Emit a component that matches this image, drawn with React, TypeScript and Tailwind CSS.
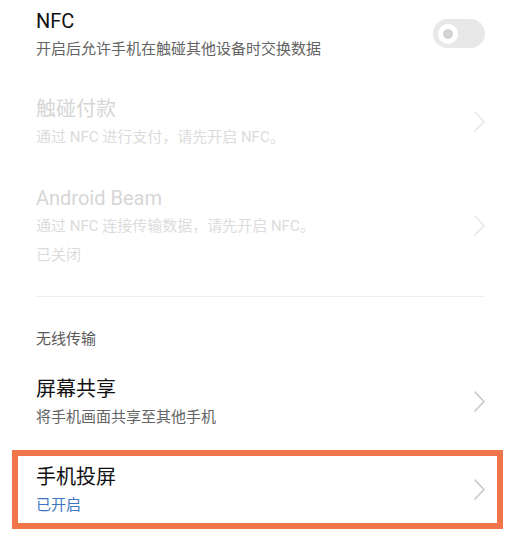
/**
 * 连接与共享 — NFC / 无线传输设置页
 */

const FONT = "font-['Roboto','Noto_Sans_CJK_SC',sans-serif]"

// ─── 小部件 ──────────────────────────────────────────────

function Chevron({ disabled }: { disabled?: boolean }) {
  return (
    <svg
      width="11"
      height="21"
      viewBox="0 0 11 21"
      fill="none"
      stroke={disabled ? '#e6e6e6' : '#c4c4c4'}
      strokeWidth="1.4"
      strokeLinecap="round"
      strokeLinejoin="round"
      className="shrink-0"
    >
      <polyline points="1,1 10,10.5 1,20" />
    </svg>
  )
}

function Toggle() {
  return (
    <div className="shrink-0 w-[52px] h-[29px] rounded-full bg-[#e8e8e8] flex items-center pl-[5px]">
      <div className="w-[20px] h-[20px] rounded-full bg-white flex items-center justify-center">
        <div className="w-[10px] h-[10px] rounded-full bg-[#d4d4d4]" />
      </div>
    </div>
  )
}

type RowProps = {
  title: string
  lines: string[]
  disabled?: boolean
  accent?: boolean
  right: React.ReactNode
}

function Row({ title, lines, disabled, accent, right }: RowProps) {
  const titleColor = disabled ? 'text-[#d6d6d6]' : 'text-[#111111]'
  const subColor = disabled
    ? 'text-[#dcdcdc]'
    : accent
      ? 'text-[#3f76c2]'
      : 'text-[#646464]'

  return (
    <div className="flex items-center">
      <div className="flex-1 flex flex-col">
        <span className={`text-[20px] leading-[26px] font-normal ${titleColor}`}>{title}</span>
        {lines.map((line, i) => (
          <span
            key={line}
            className={`text-[15px] leading-[20px] ${subColor} ${i === 0 ? 'mt-[5px]' : 'mt-[9px]'}`}
          >
            {line}
          </span>
        ))}
      </div>
      {right}
    </div>
  )
}

// ─── 页面 ────────────────────────────────────────────────

export default function App() {
  return (
    <div className={`w-[518px] h-[551px] bg-white overflow-hidden ${FONT}`}>
      <div className="px-[33px] pl-[36px] pt-[8px]">
        <Row
          title="NFC"
          lines={['开启后允许手机在触碰其他设备时交换数据']}
          right={<Toggle />}
        />
        <div className="mt-[37px]">
          <Row
            title="触碰付款"
            lines={['通过 NFC 进行支付，请先开启 NFC。']}
            disabled
            right={<Chevron disabled />}
          />
        </div>
        <div className="mt-[38px]">
          <Row
            title="Android Beam"
            lines={['通过 NFC 连接传输数据，请先开启 NFC。', '已关闭']}
            disabled
            right={<Chevron disabled />}
          />
        </div>
        <div className="mt-[31px] h-px bg-[#efefef]" />
        <p className="mt-[32px] text-[15px] leading-[20px] text-[#5a5a5a]">无线传输</p>
        <div className="mt-[27px]">
          <Row
            title="屏幕共享"
            lines={['将手机画面共享至其他手机']}
            right={<Chevron />}
          />
        </div>
      </div>

      {/* 高亮框 */}
      <div className="mt-[23px] ml-[12px] w-[491px] border-[6px] border-[#f0764a] pl-[18px] pr-[12px] py-[8px]">
        <Row title="手机投屏" lines={['已开启']} accent right={<Chevron />} />
      </div>
    </div>
  )
}
